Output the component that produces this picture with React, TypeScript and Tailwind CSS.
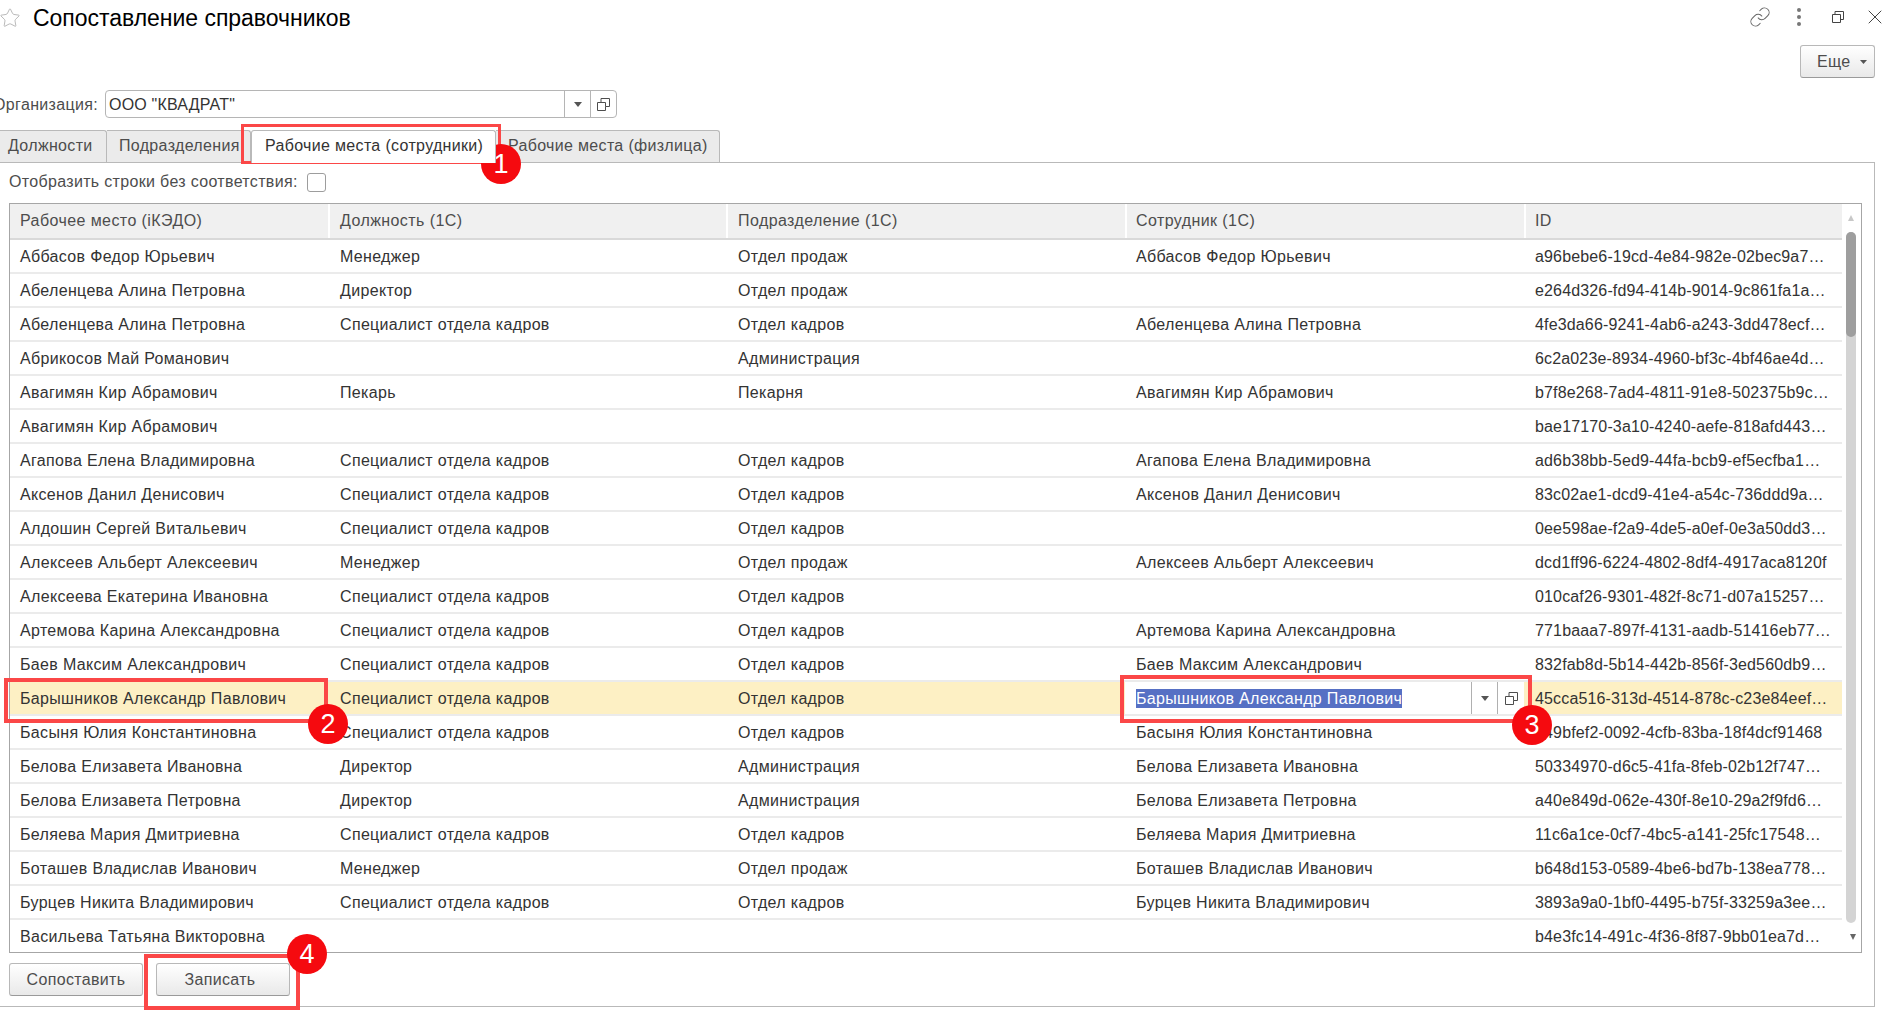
import { Link, X, Star } from "lucide-react";

const rows: [string, string, string, string, string][] = [
  ["Аббасов Федор Юрьевич", "Менеджер", "Отдел продаж", "Аббасов Федор Юрьевич", "a96bebe6-19cd-4e84-982e-02bec9a7…"],
  ["Абеленцева Алина Петровна", "Директор", "Отдел продаж", "", "e264d326-fd94-414b-9014-9c861fa1a…"],
  ["Абеленцева Алина Петровна", "Специалист отдела кадров", "Отдел кадров", "Абеленцева Алина Петровна", "4fe3da66-9241-4ab6-a243-3dd478ecf…"],
  ["Абрикосов Май Романович", "", "Администрация", "", "6c2a023e-8934-4960-bf3c-4bf46ae4d…"],
  ["Авагимян Кир Абрамович", "Пекарь", "Пекарня", "Авагимян Кир Абрамович", "b7f8e268-7ad4-4811-91e8-502375b9c…"],
  ["Авагимян Кир Абрамович", "", "", "", "bae17170-3a10-4240-aefe-818afd443…"],
  ["Агапова Елена Владимировна", "Специалист отдела кадров", "Отдел кадров", "Агапова Елена Владимировна", "ad6b38bb-5ed9-44fa-bcb9-ef5ecfba1…"],
  ["Аксенов Данил Денисович", "Специалист отдела кадров", "Отдел кадров", "Аксенов Данил Денисович", "83c02ae1-dcd9-41e4-a54c-736ddd9a…"],
  ["Алдошин Сергей Витальевич", "Специалист отдела кадров", "Отдел кадров", "", "0ee598ae-f2a9-4de5-a0ef-0e3a50dd3…"],
  ["Алексеев Альберт Алексеевич", "Менеджер", "Отдел продаж", "Алексеев Альберт Алексеевич", "dcd1ff96-6224-4802-8df4-4917aca8120f"],
  ["Алексеева Екатерина Ивановна", "Специалист отдела кадров", "Отдел кадров", "", "010caf26-9301-482f-8c71-d07a15257…"],
  ["Артемова Карина Александровна", "Специалист отдела кадров", "Отдел кадров", "Артемова Карина Александровна", "771baaa7-897f-4131-aadb-51416eb77…"],
  ["Баев Максим Александрович", "Специалист отдела кадров", "Отдел кадров", "Баев Максим Александрович", "832fab8d-5b14-442b-856f-3ed560db9…"],
  ["Барышников Александр Павлович", "Специалист отдела кадров", "Отдел кадров", "Барышников Александр Павлович", "45cca516-313d-4514-878c-c23e84eef…"],
  ["Басыня Юлия Константиновна", "Специалист отдела кадров", "Отдел кадров", "Басыня Юлия Константиновна", "e49bfef2-0092-4cfb-83ba-18f4dcf91468"],
  ["Белова Елизавета Ивановна", "Директор", "Администрация", "Белова Елизавета Ивановна", "50334970-d6c5-41fa-8feb-02b12f747…"],
  ["Белова Елизавета Петровна", "Директор", "Администрация", "Белова Елизавета Петровна", "a40e849d-062e-430f-8e10-29a2f9fd6…"],
  ["Беляева Мария Дмитриевна", "Специалист отдела кадров", "Отдел кадров", "Беляева Мария Дмитриевна", "11c6a1ce-0cf7-4bc5-a141-25fc17548…"],
  ["Боташев Владислав Иванович", "Менеджер", "Отдел продаж", "Боташев Владислав Иванович", "b648d153-0589-4be6-bd7b-138ea778…"],
  ["Бурцев Никита Владимирович", "Специалист отдела кадров", "Отдел кадров", "Бурцев Никита Владимирович", "3893a9a0-1bf0-4495-b75f-33259a3ee…"],
  ["Васильева Татьяна Викторовна", "", "", "", "b4e3fc14-491c-4f36-8f87-9bb01ea7d…"],
];

const headers = ["Рабочее место (iКЭДО)", "Должность (1С)", "Подразделение (1С)", "Сотрудник (1С)", "ID"];

function CopyIcon() {
  return (
    <svg width="13" height="13" viewBox="0 0 13 13" fill="none" stroke="#4d4d4d" strokeWidth="1">
      <path d="M.5 4.500H4V.5h8.500v8H8.500v4H.5z" />
      <path d="M4 4.500h4.500v4" />
    </svg>
  );
}

function Caret({ color = "#555" }: { color?: string }) {
  return (
    <svg width="8" height="5" viewBox="0 0 8 5">
      <path d="M0 0h8L4 5z" fill={color} />
    </svg>
  );
}

function Badge({ n, className }: { n: number; className: string }) {
  return (
    <div className={"absolute w-[40px] h-[40px] rounded-full bg-[#f50a0f] text-white flex items-center justify-center text-[27px] leading-none tracking-normal " + className}>
      {n}
    </div>
  );
}

function Btn({ label, className = "" }: { label: string; className?: string }) {
  return (
    <button className={"w-[134px] h-[33px] rounded-[3px] border border-[#b8b8b8] border-b-[#9a9a9a] bg-gradient-to-b from-white to-[#e9e9e9] text-[#4d4d4d] text-[16px] flex items-center justify-center " + className}>
      {label}
    </button>
  );
}

const tabCls = "h-[32px] flex items-center pb-[2px] border-t border-r border-[#b9b9b9] rounded-tr-[3px] bg-[#ebebeb] text-[#4d4d4d] whitespace-nowrap";

export default function App() {
  return (
    <div className="relative w-[1898px] h-[1010px] overflow-hidden bg-white text-[16px] tracking-[0.33px] text-[#333] font-['Liberation_Sans',Arial,sans-serif]">
      {/* title */}
      <div className="flex items-start h-[45px]">
        <Star className="mt-[7px] -ml-[1px]" size={22} strokeWidth={1} color="#b3b3b3" />
        <div className="ml-[12px] mt-[3px] text-[23px] tracking-[-0.03px] leading-[30px] text-black">Сопоставление справочников</div>
        <div className="ml-auto flex items-center h-[34px] text-[#666]">
          <Link size={22} strokeWidth={1.1} color="#666" className="mr-[26px]" />
          <div className="flex flex-col gap-[3px] mr-[31px]">
            <span className="w-[4px] h-[4px] rounded-full bg-[#777]" />
            <span className="w-[4px] h-[4px] rounded-full bg-[#777]" />
            <span className="w-[4px] h-[4px] rounded-full bg-[#777]" />
          </div>
          <svg width="12" height="12" viewBox="0 0 12 12" fill="none" stroke="#444" className="mr-[19px]">
            <path d="M.5 3.500h8v8h-8z" />
            <path d="M3 3V.5h8.500v8H9" />
          </svg>
          <X size={24} strokeWidth={1} color="#444" className="mr-[11px]" />
        </div>
      </div>

      {/* more button */}
      <div className="flex justify-end pr-[23px] h-[33px]">
        <button className="w-[75px] h-[33px] rounded-[3px] border border-[#b8b8b8] border-b-[#9a9a9a] bg-gradient-to-b from-white to-[#e9e9e9] text-[#4d4d4d] flex items-center pl-[16px] gap-[9px]">
          Еще
          <svg width="7" height="4" viewBox="0 0 7 4"><path d="M0 0h7L3.500 4z" fill="#555" /></svg>
        </button>
      </div>

      {/* organisation */}
      <div className="flex items-center mt-[12px] h-[28px]">
        <div className="w-[98px] flex justify-end whitespace-nowrap text-[#4d4d4d] pt-[1px]">Организация:</div>
        <div className="ml-[7px] w-[512px] h-[28px] flex border border-[#b5b5b5] rounded-[4px]">
          <div className="flex-1 pl-[3px] pt-[1px] flex items-center text-[#333] tracking-[0.2px]">ООО "КВАДРАТ"</div>
          <div className="w-[26px] border-l border-[#b5b5b5] flex items-center justify-center"><Caret /></div>
          <div className="w-[26px] border-l border-[#b5b5b5] flex items-center justify-center"><CopyIcon /></div>
        </div>
      </div>

      {/* tabs */}
      <div className="flex mt-[12px] h-[32px]">
        <div className={tabCls + " w-[107px] pl-[8px]"}>Должности</div>
        <div className={tabCls + " w-[144px] pl-[12px]"}>Подразделения</div>
        <div className="relative z-10 h-[33px] w-[245px] pl-[13px] flex items-center pb-[3px] bg-white border-t border-l border-r border-[#b9b9b9] rounded-t-[3px] whitespace-nowrap">
          Рабочие места (сотрудники)
        </div>
        <div className={tabCls + " w-[224px] pl-[12px]"}>Рабочие места (физлица)</div>
      </div>

      {/* panel */}
      <div className="w-[1875px] h-[845px] border-t border-r border-b border-[#b9b9b9] pl-[9px]">
        <div className="h-[40px] flex items-center pb-[2px]">
          <span className="text-[#4d4d4d]">Отобразить строки без соответствия:</span>
          <span className="ml-[9px] w-[19px] h-[19px] rounded-[3px] border border-[#9d9d9d] bg-white" />
        </div>

        <div className="flex w-[1853px] h-[750px] border border-[#a6a6a6] overflow-hidden">
          <div className="w-[1832px] shrink-0">
            <div className="grid grid-cols-[320px_398px_399px_399px_316px] h-[36px] border-b-2 border-[#d9d9d9] tracking-[0.42px]">
              {headers.map((h, i) => (
                <div key={h} className={"flex items-center bg-[#f0f0f0] text-[#4d4d4d] " + (i < 3 ? "pl-[10px] " : "pl-[9px] ") + (i < 4 ? "border-r-2 border-white" : "")}>
                  {h}
                </div>
              ))}
            </div>
            {rows.map((r, idx) => {
              const sel = idx === 13;
              return (
                <div
                  key={idx}
                  className={"grid grid-cols-[320px_398px_399px_399px_316px] h-[34px] border-b-2 border-[#ebebeb] " + (sel ? "bg-[#fdf0c4]" : "")}
                >
                  {r.map((c, j) =>
                    sel && j === 3 ? (
                      <div key={j} className="flex items-center bg-white -ml-[2px] mr-[2px] h-[32px]">
                        <div className="flex-1 pl-[11px] flex items-center">
                          <span className="bg-[#5670c4] text-white leading-[19px] whitespace-nowrap">{c}</span>
                        </div>
                        <div className="w-[26px] h-full border-l border-[#b0b0b0] flex items-center justify-center"><Caret /></div>
                        <div className="w-[27px] h-full border-l border-[#b0b0b0] flex items-center justify-center"><CopyIcon /></div>
                      </div>
                    ) : (
                      <div key={j} className={"flex items-center pt-[1px] whitespace-nowrap overflow-hidden " + (j < 3 ? "pl-[10px]" : "pl-[9px]") + (j === 4 ? " tracking-[0.15px]" : "")}>{c}</div>
                    )
                  )}
                </div>
              );
            })}
          </div>
          {/* scrollbar */}
          <div className="w-[19px] flex flex-col items-start pl-[4px]">
            <div className="h-[28px] w-[10px] flex items-center justify-center">
              <svg width="6" height="6" viewBox="0 0 6 6"><path d="M3 0l3 6H0z" fill="#c8c8c8" /></svg>
            </div>
            <div className="w-[10px] h-[691px] rounded-[5px] bg-[#d4d4d4]">
              <div className="w-[10px] h-[105px] rounded-[5px] bg-[#9e9e9e]" />
            </div>
            <div className="w-[10px] mt-[11px] flex justify-center pl-[3px]">
              <svg width="6" height="6" viewBox="0 0 6 6"><path d="M0 0h6L3 6z" fill="#666" /></svg>
            </div>
          </div>
        </div>

        <div className="flex gap-[13px] pt-[10px]">
          <Btn label="Сопоставить" />
          <Btn label="Записать" className="pr-[6px]" />
        </div>
      </div>

      {/* annotations */}
      <div className="absolute left-[241px] top-[124px] w-[260px] h-[40px] border-[3px] border-[#fb4747]" />
      <div className="absolute left-[4px] top-[678px] w-[324px] h-[45px] border-[4px] border-[#fb4747]" />
      <div className="absolute left-[1120px] top-[675px] w-[412px] h-[48px] border-[4px] border-[#fb4747]" />
      <div className="absolute left-[144px] top-[954px] w-[156px] h-[56px] border-[4px] border-[#fb4747]" />
      <Badge n={1} className="left-[481px] top-[144px]" />
      <Badge n={2} className="left-[308px] top-[704px]" />
      <Badge n={3} className="left-[1512px] top-[705px]" />
      <Badge n={4} className="left-[287px] top-[934px]" />
    </div>
  );
}
